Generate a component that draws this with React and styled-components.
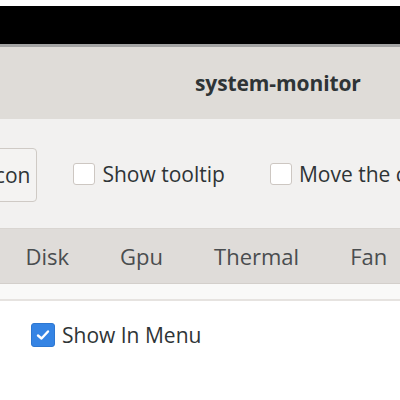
import React from "react";
import styled, { createGlobalStyle } from "styled-components";

const Global = createGlobalStyle`
  html, body { margin: 0; padding: 0; background: #ffffff; }
  body { font-family: "Open Sans", "Noto Sans", sans-serif; }
`;

const Page = styled.div`
  width: 400px;
  height: 400px;
  overflow: hidden;
  display: flex;
  flex-direction: column;
  background: #ffffff;
`;

const TopStrip = styled.div`
  height: 6px;
  background: #ffffff;
  flex: none;
`;

const BlackBar = styled.div`
  height: 38px;
  background: #000000;
  border-bottom: 3px solid #a3a3a3;
  flex: none;
`;

const TitleBar = styled.div`
  height: 72px;
  flex: none;
  background: #dfdcd8;
  display: flex;
  align-items: center;
  padding-left: 195px;
  box-sizing: border-box;
`;

const Title = styled.span`
  font-weight: 700;
  font-size: 21px;
  color: #2e3436;
  white-space: nowrap;
  letter-spacing: -0.1px;
`;

const Toolbar = styled.div`
  height: 110px;
  flex: none;
  box-sizing: border-box;
  background: #f2f1f0;
  border-bottom: 1px solid #d9d5d1;
  display: flex;
  align-items: center;
  gap: 36px;
  margin-left: -14px;
  padding-top: 1px;
  white-space: nowrap;
`;

const Button = styled.div`
  height: 54px;
  box-sizing: border-box;
  border: 1px solid #cfcac5;
  border-radius: 4px;
  padding: 0 6px 0 2px;
  display: flex;
  align-items: center;
  font-size: 21px;
  color: #2e3436;
  background: #f4f3f2;
  margin-top: 1px;
`;

const Check = styled.label`
  display: flex;
  align-items: center;
  gap: 7px;
  font-size: 21px;
  color: #2e3436;
`;

const Box = styled.span`
  width: ${(p) => (p.$checked ? 24 : 22)}px;
  height: ${(p) => (p.$checked ? 24 : 22)}px;
  box-sizing: border-box;
  border-radius: 3px;
  flex: none;
  display: flex;
  align-items: center;
  justify-content: center;
  background: ${(p) => (p.$checked ? "#3584e4" : "#ffffff")};
  border: 1px solid ${(p) => (p.$checked ? "#2d77d1" : "#cdc7c2")};
`;

const ToolbarItems = styled.div`
  display: flex;
  align-items: center;
  gap: 45px;
`;

const TabBar = styled.div`
  height: 55px;
  flex: none;
  box-sizing: border-box;
  background: #dfdcd9;
  border-bottom: 1px solid #d3cfcb;
  display: flex;
  align-items: center;
  white-space: nowrap;
`;

const Tab = styled.div`
  padding: 0 25.5px;
  font-size: 22px;
  color: #4a4d4f;
  display: flex;
  align-items: center;
  height: 100%;
`;

const Gap = styled.div`
  height: 15px;
  flex: none;
  background: #f9f9f8;
  border-bottom: 2px solid #e6e3e0;
`;

const Content = styled.div`
  flex: 1;
  background: #ffffff;
  padding: 20px 0 0 31px;
`;

const Tick = () => (
  <svg width="16" height="16" viewBox="0 0 16 16">
    <path d="M3 8.5 L6.5 11.5 L13 4.5" fill="none" stroke="#ffffff" strokeWidth="2.4" strokeLinecap="round" strokeLinejoin="round" />
  </svg>
);

export default function App() {
  return (
    <>
      <Global />
      <Page>
        <TopStrip />
        <BlackBar />
        <TitleBar>
          <Title>system-monitor</Title>
        </TitleBar>
        <Toolbar>
          <Button>Icon</Button>
          <ToolbarItems>
            <Check>
              <Box />
              Show tooltip
            </Check>
            <Check>
              <Box />
              Move the clock
            </Check>
          </ToolbarItems>
        </Toolbar>
        <TabBar>
          <Tab>Disk</Tab>
          <Tab>Gpu</Tab>
          <Tab>Thermal</Tab>
          <Tab>Fan</Tab>
        </TabBar>
        <Gap />
        <Content>
          <Check>
            <Box $checked>
              <Tick />
            </Box>
            Show In Menu
          </Check>
        </Content>
      </Page>
    </>
  );
}
